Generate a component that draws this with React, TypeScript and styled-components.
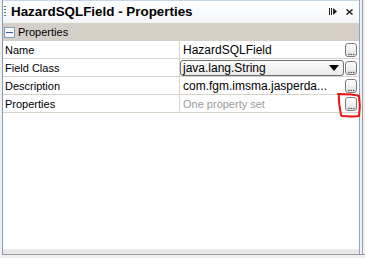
import React from "react";
import styled, { createGlobalStyle } from "styled-components";

const Global = createGlobalStyle`
  html, body { margin: 0; padding: 0; background: #f0f0f0; }
  body { font-family: "Liberation Sans", Arial, sans-serif; }
`;

const Frame = styled.div`
  position: relative;
  width: 365px;
  height: 258px;
  background: #f0f0f0;
  display: flex;
  flex-direction: column;
  overflow: hidden;
`;

const Top = styled.div`
  display: flex;
  height: 254px;
`;

const Panel = styled.div`
  margin-left: 2px;
  width: 356px;
  border-left: 1px solid #7f9db9;
  border-right: 1px solid #8aa6c8;
  display: flex;
  flex-direction: column;
  background: #fff;
`;

const SideGap = styled.div`
  width: 2px;
  background: #f0f0f0;
`;

const SideLine = styled.div`
  width: 1px;
  background: #a0a0a0;
`;

const BottomLine = styled.div`
  height: 1px;
  margin-left: 2px;
  background: #9a9a9a;
`;

const TitleBar = styled.div`
  height: 21px;
  border-top: 1px solid #c9d6e6;
  border-bottom: 1px solid #f4f4f4;
  background: linear-gradient(#ffffff, #f3f5f8);
  display: flex;
  align-items: center;
  padding-left: 1px;
  padding-right: 6px;
`;

const Grip = styled.div`
  width: 2px;
  height: 12px;
  margin-right: 5px;
  background-image: repeating-linear-gradient(#6b6b6b 0 1px, transparent 1px 3px);
`;

const Title = styled.div`
  flex: 1;
  font-size: 13.4px;
  font-weight: bold;
  color: #000;
  white-space: nowrap;
`;

const TitleIcons = styled.div`
  display: flex;
  align-items: center;
  gap: 8px;
`;

const SectionHeader = styled.div`
  height: 18px;
  background: #d4d0c8;
  display: flex;
  align-items: center;
  padding-left: 1px;
  gap: 3px;
  font-size: 11px;
  color: #000;
`;

const MinusBox = styled.div`
  width: 9px;
  height: 9px;
  border: 1px solid #7f9db9;
  background: #f7f7f7;
  display: flex;
  align-items: center;
  justify-content: center;
  &::after {
    content: "";
    width: 7px;
    height: 1px;
    background: #3a5f9a;
  }
`;

const Row = styled.div`
  height: 17px;
  border-bottom: 1px solid #d8d2c8;
  display: flex;
`;

const Label = styled.div`
  width: 174px;
  padding-left: 2px;
  border-right: 1px solid #d8d2c8;
  font-size: 11px;
  color: #000;
  display: flex;
  align-items: center;
`;

const Value = styled.div`
  flex: 1;
  min-width: 0;
  display: flex;
  align-items: center;
  padding-right: 2px;
`;

const ValueText = styled.div<{ $muted?: boolean }>`
  flex: 1;
  min-width: 0;
  padding-left: 3px;
  font-size: ${(p) => (p.$muted ? "11px" : "12px")};
  color: ${(p) => (p.$muted ? "#9a9a9a" : "#000")};
  white-space: nowrap;
  overflow: hidden;
  padding-right: 1px;
`;

const Combo = styled.div`
  flex: 1;
  height: 16px;
  margin-right: 1px;
  border: 1px solid #6f6f6f;
  border-radius: 3px;
  background: linear-gradient(#fdfdfd, #e9e9e9);
  display: flex;
  align-items: center;
  padding-left: 2px;
  padding-right: 4px;
  font-size: 12px;
  color: #000;
  box-sizing: border-box;
`;

const ComboText = styled.div`
  flex: 1;
`;

const Arrow = styled.div`
  width: 0;
  height: 0;
  border-left: 5px solid transparent;
  border-right: 5px solid transparent;
  border-top: 6px solid #000;
`;

const DotsButton = styled.div`
  width: 12px;
  height: 14px;
  box-sizing: border-box;
  border: 1px solid #7b7b7b;
  border-radius: 3px;
  background: linear-gradient(#ffffff, #e2e2e2);
  font-size: 10px;
  line-height: 8px;
  color: #000;
  display: flex;
  align-items: flex-end;
  justify-content: center;
  letter-spacing: -0.5px;
  overflow: hidden;
  flex-shrink: 0;
`;

const Body = styled.div`
  flex: 1;
  background: #fff;
`;

const Strip = styled.div`
  height: 5px;
  background: #e9e9e9;
`;

const Annotation = styled.svg`
  position: absolute;
  left: 334px;
  top: 88px;
  pointer-events: none;
`;

const DockIcon = () => (
  <svg width="9" height="7" viewBox="0 0 9 7">
    <rect x="0" y="0" width="1" height="7" fill="#222" />
    <rect x="2" y="0" width="1" height="7" fill="#222" />
    <path d="M4 0 L8 3.5 L4 7 Z" fill="#222" />
  </svg>
);

const CloseIcon = () => (
  <svg width="7" height="6" viewBox="0 0 7 6">
    <path d="M0.5 0.5 L6.5 5.5 M6.5 0.5 L0.5 5.5" stroke="#222" strokeWidth="1.5" />
  </svg>
);

const Button = () => <DotsButton>...</DotsButton>;

export default function App() {
  return (
    <>
      <Global />
      <Frame>
        <Top>
          <Panel>
            <TitleBar>
              <Grip />
              <Title>HazardSQLField - Properties</Title>
              <TitleIcons>
                <DockIcon />
                <CloseIcon />
              </TitleIcons>
            </TitleBar>
            <SectionHeader>
              <MinusBox />
              Properties
            </SectionHeader>
            <Row>
              <Label>Name</Label>
              <Value>
                <ValueText>HazardSQLField</ValueText>
                <Button />
              </Value>
            </Row>
            <Row>
              <Label>Field Class</Label>
              <Value>
                <Combo>
                  <ComboText>java.lang.String</ComboText>
                  <Arrow />
                </Combo>
                <Button />
              </Value>
            </Row>
            <Row>
              <Label>Description</Label>
              <Value>
                <ValueText>com.fgm.imsma.jasperda...</ValueText>
                <Button />
              </Value>
            </Row>
            <Row>
              <Label>Properties</Label>
              <Value>
                <ValueText $muted>One property set</ValueText>
                <Button />
              </Value>
            </Row>
            <Body />
            <Strip />
          </Panel>
          <SideGap />
          <SideLine />
        </Top>
        <BottomLine />
        <Annotation width="30" height="32" viewBox="0 0 30 32">
          <path
            d="M5 6 C4 12, 6 20, 7 27 L8 28 C13 28, 20 29, 25 28 C26 22, 26 14, 25 8 C20 6, 12 6, 4 6"
            fill="none"
            stroke="#ee1111"
            strokeWidth="2"
            strokeLinecap="round"
            strokeLinejoin="round"
          />
        </Annotation>
      </Frame>
    </>
  );
}
